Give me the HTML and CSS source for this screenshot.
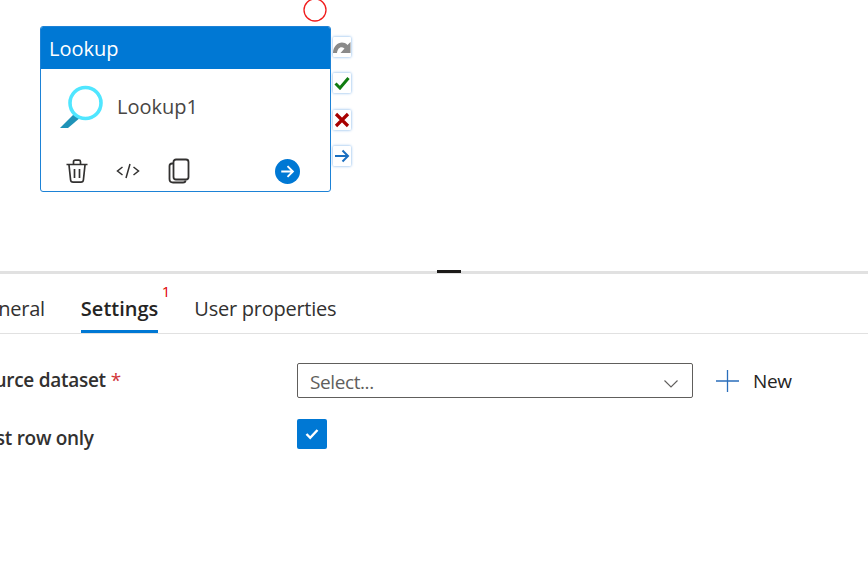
FILE: index.html
```html
<!DOCTYPE html>
<html lang="en">
<head>
<meta charset="utf-8">
<title>Lookup</title>
<link rel="stylesheet" href="styles.css">
</head>
<body>
<section class="canvas">
  <svg class="ring" width="26" height="24" viewBox="0 0 26 24"><circle cx="13" cy="10" r="11" fill="none" stroke="#f01c1c" stroke-width="1.3"/></svg>
  <div class="node">
    <div class="node-title">Lookup</div>
    <div class="node-body">
      <svg class="lookup-icon" width="48" height="48" viewBox="0 0 48 48">
        <path d="M3 44 L19 28 L24 33 L11 44 Z" fill="#1f93b8"/>
        <circle cx="28.500" cy="19" r="15.500" fill="#fff" stroke="#50e6ff" stroke-width="3.600"/>
      </svg>
      <span class="node-name">Lookup1</span>
    </div>
    <div class="node-actions">
      <svg width="24" height="26" viewBox="0 0 24 26" fill="none" stroke="#323130" stroke-width="1.7"><path d="M1.500 6.500h21M8.500 6.200V3.800q0-1.600 1.600-1.600h3.800q1.600 0 1.600 1.600v2.400M4 7l1.600 15q.2 2.200 2.500 2.200h7.800q2.300 0 2.500-2.200L20 7M9.500 11v9M14.500 11v9"/></svg>
      <svg class="code" width="24" height="18" viewBox="0 0 24 18" fill="none" stroke="#323130" stroke-width="1.5"><path d="M6.500 5 1.500 9l5 4M17.500 5l5 4-5 4M14 2 10 16"/></svg>
      <svg class="copy" width="24" height="26" viewBox="0 0 24 26" fill="none" stroke="#323130" stroke-width="1.8"><rect x="6.500" y="1.500" width="15" height="20" rx="2.500"/><path d="M6 5.500H5Q2.500 5.500 2.500 8v13q0 3.500 3.500 3.500h10q2.500 0 2.500-2"/></svg>
      <svg class="go" width="25" height="25" viewBox="0 0 24 24"><circle cx="12" cy="12" r="12" fill="#0078d4"/><path d="M6 12h11M12 6.800l5.200 5.200-5.200 5.200" fill="none" stroke="#fff" stroke-width="1.800"/></svg>
    </div>
  </div>
  <div class="ports">
    <span class="port"><svg width="18" height="14" viewBox="0 0 18 14"><path d="M0 12.500C.5 4 9-.5 14.500 5L17.500 2V13H7.500L11.500 8.500C8 5.500 4.500 8 4 13H0Z" fill="#8a8a8a"/></svg></span>
    <span class="port"><svg width="16" height="14" viewBox="0 0 16 14" fill="none" stroke="#107c10" stroke-width="3"><path d="M1.500 7.500 6 12 14.500 2"/></svg></span>
    <span class="port"><svg width="16" height="16" viewBox="0 0 16 16" fill="none" stroke="#a80000" stroke-width="3.200"><path d="M2 2l12 12M14 2 2 14"/></svg></span>
    <span class="port"><svg width="16" height="14" viewBox="0 0 16 14" fill="none" stroke="#1a6fc0" stroke-width="2"><path d="M1 7h13M8.500 1.500 14 7l-5.500 5.500"/></svg></span>
  </div>
</section>
<div class="splitter"><span class="grip"></span></div>
<section class="panel">
  <nav class="tabs">
    <span class="tab">General</span>
    <span class="tab active">Settings<sup class="badge">1</sup></span>
    <span class="tab">User properties</span>
  </nav>
  <div class="form">
    <label class="field-label">Source dataset <span class="req">*</span></label>
    <div class="field-control">
      <div class="select"><span>Select...</span>
        <svg width="16" height="10" viewBox="0 0 16 10" fill="none" stroke="#605e5c" stroke-width="1.100"><path d="M1.500 1.500 8 8l6.500-6.500"/></svg>
      </div>
      <button class="new" type="button">
        <svg width="24" height="24" viewBox="0 0 24 24" fill="none" stroke="#2a6ebb" stroke-width="1.300"><path d="M0 12h23M11.500 1v22"/></svg>
        New
      </button>
    </div>
    <label class="field-label low">First row only</label>
    <div class="field-control">
      <span class="checkbox"><svg width="14" height="12" viewBox="0 0 14 12" fill="none" stroke="#fff" stroke-width="2.400"><path d="M1.500 6 5.200 9.800 12.500 2"/></svg></span>
    </div>
  </div>
</section>
</body>
</html>
```
FILE: styles.css
```css
* { box-sizing: border-box; }
html, body { margin: 0; height: 100%; overflow: hidden; background: #fff; }
body { font-family: "Open Sans", "Noto Sans", sans-serif; color: #323130; }

.canvas { position: relative; height: 271px; }
.ring { position: absolute; left: 302px; top: 0; }
.node {
  position: absolute; left: 40px; top: 26px; width: 291px; height: 166px;
  border: 1px solid #1d82d6; border-radius: 3px; overflow: hidden;
  display: flex; flex-direction: column;
}
.node-title {
  height: 42px; background: #0078d4; color: #fff;
  font-size: 20px; line-height: 44px; padding-left: 8px;
}
.node-body { display: flex; align-items: center; height: 78px; padding-left: 16px; }
.lookup-icon { flex: none; }
.node-name { font-size: 20px; line-height: 24px; margin: -3px 0 0 12px; color: #484644; }
.node-actions { display: flex; align-items: center; padding-left: 24px; height: 26px; margin-top: 11px; }
.node-actions .code { margin-left: 27px; }
.node-actions .copy { margin-left: 27px; }
.node-actions .go { margin-left: 84px; }

.ports { position: absolute; left: 333px; top: 37px; display: flex; flex-direction: column; gap: 16.300px; }
.port {
  width: 18px; height: 20px; display: flex; align-items: center; justify-content: center;
  background: #fff; box-shadow: 0 0 3px #6fa9e6; border-radius: 1px;
}

.splitter { position: relative; height: 3px; background: #e1e1e1; }
.grip { position: absolute; left: 437px; top: -1px; width: 24px; height: 3px; background: #1b1a19; }

.panel { margin-left: -27px; }
.tabs { display: flex; gap: 36px; height: 60px; border-bottom: 1px solid #e1e1e1; padding-top: 20px; font-size: 20px; }
.tab { position: relative; height: 39px; line-height: 30px; letter-spacing: -.25px; white-space: nowrap; }
.tab.active { font-weight: 600; letter-spacing: 0; border-bottom: 3px solid #0078d4; color: #252423; }
.badge { position: absolute; right: -12px; top: -12px; font-size: 15px; line-height: 18px; font-weight: 400; color: #e00000; }

.form { display: grid; grid-template-columns: 324px 1fr; grid-template-rows: 34px 32px; row-gap: 22px; margin-top: 29px; }
.field-label { font-size: 19px; font-weight: 600; display: flex; align-items: center; gap: 5px; letter-spacing: -.28px; height: 34px; white-space: nowrap; }
.field-label.low { height: 38px; }
.req { color: #d13438; font-weight: 400; }
.field-control { display: flex; align-items: flex-start; }
.select {
  width: 396px; height: 35px; flex: none; border: 1px solid #605e5c; border-radius: 2px;
  display: flex; align-items: center; justify-content: space-between;
  padding: 2px 13px 0 12px; font-size: 19px; color: #605e5c; letter-spacing: -.4px;
}
.select svg { margin-top: 4px; }
.new {
  display: flex; align-items: center; gap: 13px; margin-left: 23px; height: 35px; padding: 0;
  border: 0; background: none; font: inherit; font-size: 19px; color: #252423; letter-spacing: -.4px;
}
.checkbox { width: 30px; height: 30px; background: #0078d4; border-radius: 2px; display: flex; align-items: center; justify-content: center; }
```
